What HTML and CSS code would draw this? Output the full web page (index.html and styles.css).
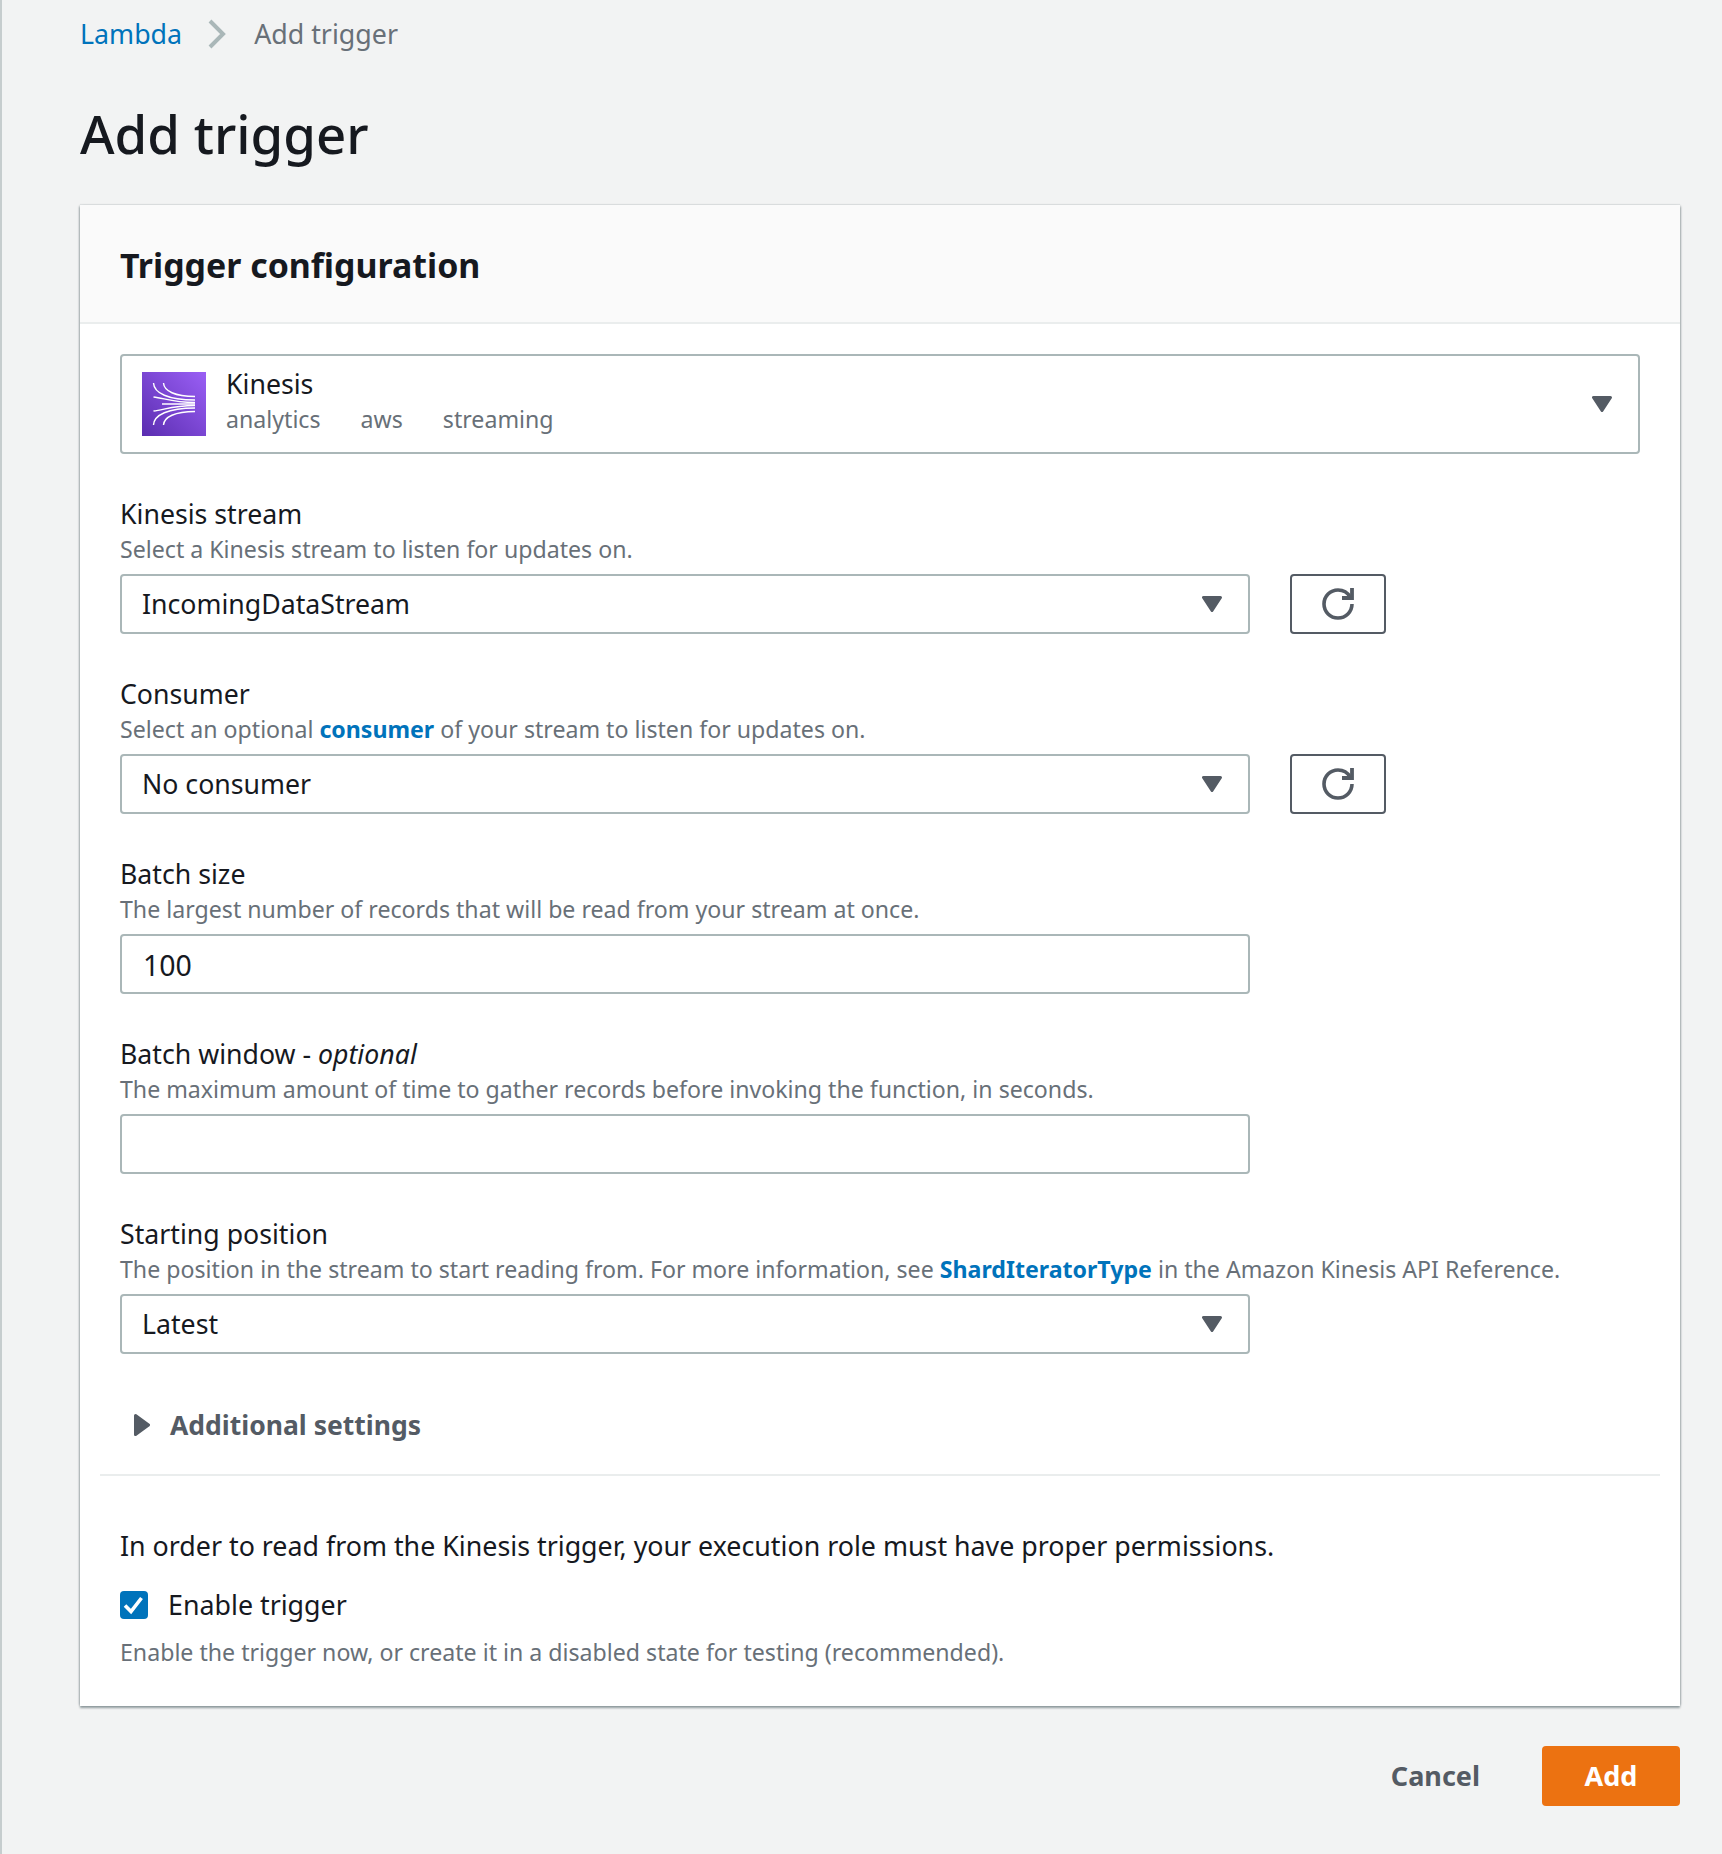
FILE: index.html
```html
<!DOCTYPE html>
<html lang="en">
<head>
<meta charset="utf-8">
<title>Add trigger</title>
<link rel="stylesheet" href="styles.css">
</head>
<body>
<svg class="defs" width="0" height="0" aria-hidden="true">
  <defs>
    <linearGradient id="kin" x1="0" y1="1" x2="1" y2="0">
      <stop offset="0" stop-color="#5a2db0"/>
      <stop offset="1" stop-color="#9a5ff5"/>
    </linearGradient>
    <symbol id="caret" viewBox="0 0 20 16"><path d="M1.5 1.5h17L10 14.5z" fill="#545b64" stroke="#545b64" stroke-width="3" stroke-linejoin="round"/></symbol>
    <symbol id="refresh" viewBox="0 0 16 16"><path d="M10 5h5V0" fill="none" stroke="#545b64" stroke-width="1.9"/><path d="M15 8a7 7 0 1 1-7-7c2.62 0 4.91 1.44 6.11 3.57" fill="none" stroke="#545b64" stroke-width="1.8"/></symbol>
  </defs>
</svg>
<main class="page">
  <nav class="crumbs">
    <a class="crumb-link" href="#">Lambda</a>
    <svg class="crumb-sep" viewBox="0 0 18 30"><path d="M2 2l13 13L2 28" fill="none" stroke="#aab7b8" stroke-width="4"/></svg>
    <span class="crumb-current">Add trigger</span>
  </nav>
  <h1 class="title">Add trigger</h1>
  <section class="card">
    <header class="card-head"><h2 class="card-title">Trigger configuration</h2></header>
    <div class="card-body">
      <div class="service">
        <svg class="service-icon" viewBox="0 0 64 64">
          <rect width="64" height="64" fill="url(#kin)"/>
          <g fill="none" stroke="#fff" stroke-width="1.4">
            <path d="M11.500 11C12 21 26 28 53 28"/>
            <path d="M21.500 11C22 19 33 24.500 53 24.500"/>
            <path d="M11.500 25C22 26 30 30.500 53 30.500"/>
            <path d="M20 32H53"/>
            <path d="M11.500 39C22 38 30 33.500 53 33.500"/>
            <path d="M21.500 53C22 45 33 39.500 53 39.500"/>
            <path d="M11.500 53C12 43 26 36 53 36"/>
          </g>
        </svg>
        <div class="service-text">
          <div class="service-name">Kinesis</div>
          <div class="service-tags"><span>analytics</span><span>aws</span><span>streaming</span></div>
        </div>
        <svg class="caret"><use href="#caret"/></svg>
      </div>

      <div class="field">
        <div class="label">Kinesis stream</div>
        <div class="desc">Select a Kinesis stream to listen for updates on.</div>
        <div class="control-row">
          <div class="select"><span class="select-value">IncomingDataStream</span><svg class="caret"><use href="#caret"/></svg></div>
          <button class="icon-btn" type="button" aria-label="Refresh"><svg class="refresh"><use href="#refresh"/></svg></button>
        </div>
      </div>

      <div class="field">
        <div class="label">Consumer</div>
        <div class="desc">Select an optional <a class="link" href="#">consumer</a> of your stream to listen for updates on.</div>
        <div class="control-row">
          <div class="select"><span class="select-value">No consumer</span><svg class="caret"><use href="#caret"/></svg></div>
          <button class="icon-btn" type="button" aria-label="Refresh"><svg class="refresh"><use href="#refresh"/></svg></button>
        </div>
      </div>

      <div class="field">
        <div class="label">Batch size</div>
        <div class="desc">The largest number of records that will be read from your stream at once.</div>
        <div class="control-row"><input class="input" type="text" value="100"></div>
      </div>

      <div class="field">
        <div class="label">Batch window - <em>optional</em></div>
        <div class="desc">The maximum amount of time to gather records before invoking the function, in seconds.</div>
        <div class="control-row"><input class="input" type="text"></div>
      </div>

      <div class="field">
        <div class="label">Starting position</div>
        <div class="desc">The position in the stream to start reading from. For more information, see <a class="link" href="#">ShardIteratorType</a> in the Amazon Kinesis API Reference.</div>
        <div class="control-row">
          <div class="select"><span class="select-value">Latest</span><svg class="caret"><use href="#caret"/></svg></div>
        </div>
      </div>

      <div class="expander">
        <svg class="expander-icon" viewBox="0 0 16 22"><path d="M1.500 1.500L14.500 11 1.500 20.500z" fill="#545b64" stroke="#545b64" stroke-width="3" stroke-linejoin="round"/></svg>
        <span>Additional settings</span>
      </div>
      <div class="rule"></div>
      <p class="note">In order to read from the Kinesis trigger, your execution role must have proper permissions.</p>
      <label class="check">
        <span class="check-box"><svg viewBox="0 0 28 28"><path d="M5 14.500l6 6L21.500 7" fill="none" stroke="#fff" stroke-width="3.600"/></svg></span>
        <span>Enable trigger</span>
      </label>
      <div class="check-desc">Enable the trigger now, or create it in a disabled state for testing (recommended).</div>
    </div>
  </section>
  <div class="actions">
    <button class="btn-text" type="button">Cancel</button>
    <button class="btn-primary" type="button">Add</button>
  </div>
</main>
</body>
</html>
```

FILE: styles.css
```css
* { box-sizing: border-box; }
html, body { margin: 0; padding: 0; }
body {
  background: #f2f3f3;
  color: #16191f;
  font-family: "Noto Sans", "Liberation Sans", sans-serif;
  font-size: 26px;
  min-height: 1854px;
}
.defs { position: absolute; }
.page {
  border-left: 2px solid #c6cdce;
  min-height: 1854px;
  padding: 0 42px 0 78px;
}
.crumbs {
  display: flex;
  align-items: center;
  height: 68px;
  font-size: 26.800px;
  line-height: 36px;
}
.crumb-link { color: #0073bb; text-decoration: none; }
.crumb-sep { width: 18px; height: 30px; margin: 0 28px 0 26px; }
.crumb-current { color: #687078; }
.title {
  margin: 0;
  height: 137px;
  font-size: 52.800px;
  line-height: 131px;
  font-weight: 500;
}
.card {
  background: #fff;
  box-shadow: 0 2px 2px 0 rgba(0,28,36,.4), 2px 0 2px -1px rgba(0,28,36,.2), -2px 0 2px -1px rgba(0,28,36,.2), 0 -1px 1px 0 rgba(0,28,36,.08);
}
.card-head {
  height: 119px;
  background: #fafafa;
  border-bottom: 2px solid #eaeded;
  padding: 0 40px;
  display: flex;
  align-items: center;
}
.card-title {
  margin: 2px 0 0;
  font-size: 33.900px;
  line-height: 44px;
  font-weight: 700;
}
.card-body { padding: 30px 40px 36px; }
.service {
  display: flex;
  align-items: center;
  height: 100px;
  border: 2px solid #aab7b8;
  border-radius: 4px;
  padding: 0 26px 0 20px;
}
.service-icon { width: 64px; height: 64px; flex: none; }
.service-text { flex: 1; margin: -6px 0 0 20px; }
.service-name { font-size: 26.700px; line-height: 36px; }
.service-tags {
  display: flex;
  gap: 40px;
  color: #687078;
  font-size: 23.150px;
  line-height: 34px;
}
.caret { width: 20px; height: 16px; flex: none; }
.field { margin-top: 42px; }
.label { font-size: 26.700px; line-height: 36px; }
.desc { color: #687078; font-size: 23.150px; line-height: 35px; margin-bottom: 7px; }
.link { color: #0073bb; font-weight: 700; text-decoration: none; }
.control-row { display: flex; gap: 40px; }
.select, .input {
  width: 1130px;
  height: 60px;
  border: 2px solid #aab7b8;
  border-radius: 4px;
  background: #fff;
  font: inherit;
  font-size: 26.700px;
  color: #16191f;
  padding: 0 20px;
}
.input { font-size: 28.500px; padding: 2px 20px 0 21px; }
.select {
  display: flex;
  align-items: center;
  justify-content: space-between;
  padding-right: 26px;
}
.select-value { margin-top: -2px; }
.icon-btn {
  width: 96px;
  height: 60px;
  padding: 0;
  border: 2px solid #545b64;
  border-radius: 4px;
  background: #fff;
  display: flex;
  align-items: center;
  justify-content: center;
}
.refresh { width: 32px; height: 32px; }
.expander {
  display: flex;
  align-items: center;
  margin-top: 50px;
  height: 42px;
  padding-left: 14px;
  color: #545b64;
  font-size: 26.500px;
  font-weight: 700;
  line-height: 40px;
}
.expander-icon { width: 16px; height: 22px; margin-right: 20px; }
.rule { height: 2px; margin: 28px -20px 0; background: #eaeded; }
.note { margin: 52px 0 0; font-size: 26.800px; line-height: 36px; }
.check {
  display: flex;
  align-items: center;
  gap: 20px;
  margin-top: 23px;
  font-size: 26.800px;
  line-height: 36px;
}
.check-box {
  width: 28px;
  height: 28px;
  border-radius: 4px;
  background: #0073bb;
  flex: none;
  display: block;
}
.check-box svg { display: block; width: 28px; height: 28px; }
.check-desc { color: #687078; font-size: 23.150px; line-height: 36px; margin-top: 11px; }
.actions {
  display: flex;
  justify-content: flex-end;
  align-items: center;
  margin-top: 40px;
  gap: 62px;
}
.btn-text, .btn-primary {
  font: inherit;
  font-size: 27px;
  font-weight: 700;
  border: 0;
  padding: 0 0 2px;
  height: 60px;
  border-radius: 4px;
}
.btn-text { background: none; color: #545b64; }
.btn-primary { width: 138px; background: #ec7211; color: #fff; }
```
